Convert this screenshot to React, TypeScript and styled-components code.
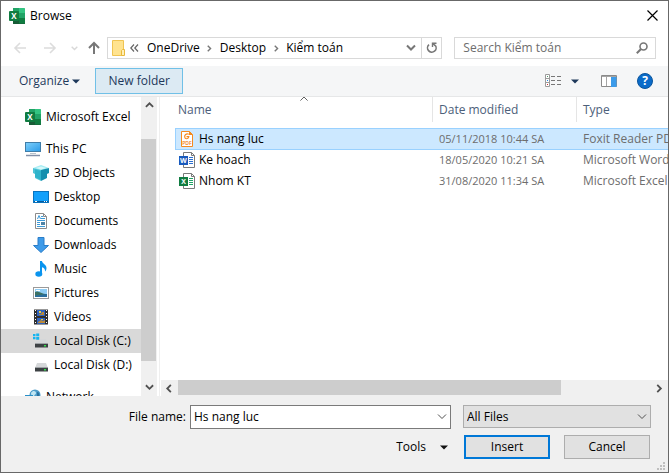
import React, { useState } from "react";
import styled, { createGlobalStyle, css } from "styled-components";

const GlobalStyle = createGlobalStyle`
  *, *::before, *::after { box-sizing: border-box; }
  body { margin: 0; }
  body, button, input, select {
    font-family: "Open Sans", "Noto Sans", sans-serif;
    font-size: 12px;
    line-height: 16px;
    color: #000;
  }
  button { border: 0; padding: 0; background: none; cursor: default; }
`;

/* ---------- shell ---------- */

const Dialog = styled.main`
  display: flex;
  flex-direction: column;
  height: 100vh;
  border: 1px solid #686868;
  background: #fff;
  overflow: hidden;
`;

const TitleBar = styled.header`
  display: flex;
  align-items: center;
  gap: 5px;
  height: 29px;
  padding: 0 10px 0 8px;
  flex: none;
`;

const Title = styled.h1`
  margin: 0;
  flex: 1;
  font-size: 12px;
  font-weight: 400;
`;

const IconButton = styled.button<{ $w?: number }>`
  display: flex;
  align-items: center;
  justify-content: center;
  flex: none;
  width: ${(p) => p.$w ?? 16}px;
  height: 20px;
`;

const NavRow = styled.nav`
  display: flex;
  align-items: center;
  flex: none;
  height: 36px;
  padding: 0 12px 0 4px;
`;

const NavButtons = styled.div`
  display: flex;
  align-items: center;
  flex: none;
  margin-right: 2px;
`;

const AddressBar = styled.div`
  display: flex;
  align-items: center;
  flex: 330 1 0;
  min-width: 0;
  height: 22px;
  border: 1px solid #d9d9d9;
  padding-left: 4px;
`;

const Crumbs = styled.ol`
  display: flex;
  align-items: center;
  flex: 1;
  min-width: 0;
  margin: 0;
  padding: 0 0 0 4px;
  list-style: none;
  white-space: nowrap;
`;

const Crumb = styled.li`
  display: flex;
  align-items: center;
`;

const CrumbSeparator = styled.span<{ $first?: boolean }>`
  display: flex;
  justify-content: ${(p) => (p.$first ? "flex-start" : "center")};
  width: ${(p) => (p.$first ? 17 : 20)}px;
`;

const Refresh = styled(IconButton)`
  border-left: 1px solid #d9d9d9;
`;

const SearchBox = styled.label`
  display: flex;
  align-items: center;
  flex: 185 1 0;
  min-width: 0;
  height: 22px;
  margin-left: 12px;
  border: 1px solid #d9d9d9;
  padding: 0 7px 0 8px;
`;

const SearchInput = styled.input`
  flex: 1;
  min-width: 0;
  border: 0;
  padding: 0;
  outline: 0;
  background: none;
  &::placeholder { color: #6d6d6d; opacity: 1; }
`;

const Toolbar = styled.div`
  display: flex;
  align-items: center;
  flex: none;
  height: 31px;
  padding: 0 15px 0 18px;
  background: #f5f6f7;
  border-bottom: 1px solid #e6e7e8;
`;

const ToolButton = styled.button`
  display: flex;
  align-items: center;
  gap: 3px;
  height: 26px;
  color: #1e395b;
`;

const NewFolderButton = styled(ToolButton)`
  justify-content: center;
  width: 88px;
  margin-left: 15px;
  background: #dceaf3;
  border: 1px solid #70c0e7;
`;

const ToolGroup = styled.div`
  display: flex;
  align-items: center;
  margin-left: auto;
`;

const ViewButton = styled(ToolButton)`
  gap: 9px;
  margin-right: 22px;
`;

const HelpButton = styled.button`
  width: 16px;
  height: 16px;
  margin-left: 20px;
  border-radius: 50%;
  background: #0a6bc9;
  border: 1px solid #0b559c;
  color: #fff;
  font-weight: 700;
  line-height: 14px;
`;

/* ---------- body ---------- */

const Body = styled.div`
  display: flex;
  flex: 1;
  min-height: 0;
`;

const Sidebar = styled.nav`
  display: flex;
  flex: none;
  width: 159px;
  padding-right: 2px;
  border-right: 1px solid #efefef;
  overflow: hidden;
`;

const Tree = styled.ul`
  flex: 1;
  margin: 0;
  padding: 8px 0 0;
  list-style: none;
`;

const TreeItem = styled.li<{ $depth: number; $selected?: boolean; $gap?: boolean }>`
  display: flex;
  align-items: center;
  gap: 5px;
  height: 24px;
  margin-top: ${(p) => (p.$gap ? 8 : 0)}px;
  padding-left: ${(p) => 24 + p.$depth * 8}px;
  white-space: nowrap;
  background: ${(p) => (p.$selected ? "#d9d9d9" : "transparent")};
`;

const scrollTrack = css`
  display: flex;
  flex: none;
  background: #f0f0f0;
`;

const VScroll = styled.div`
  ${scrollTrack}
  flex-direction: column;
  width: 16px;
`;

const HScroll = styled.div`
  ${scrollTrack}
  height: 16px;
  margin-left: 1px;
`;

const ScrollArrow = styled.button<{ $size: number }>`
  display: flex;
  flex: none;
  align-items: center;
  justify-content: center;
  min-width: 15px;
  min-height: 15px;
  flex-basis: ${(p) => p.$size}px;
`;

const ScrollSpace = styled.div<{ $grow: number }>`
  flex: ${(p) => p.$grow} 1 0;
`;

const ScrollThumb = styled(ScrollSpace)`
  background: #cdcdcd;
`;

const VThumb = styled(ScrollThumb)`
  width: 15px;
`;

const HThumb = styled(ScrollThumb)`
  height: 15px;
`;

const FilePane = styled.section`
  display: flex;
  flex-direction: column;
  flex: 1;
  min-width: 0;
`;

const FileView = styled.div`
  flex: 1;
  min-height: 0;
  overflow: hidden;
  padding-left: 15px;
`;

const FileTable = styled.table`
  width: 637px;
  min-width: 100%;
  table-layout: fixed;
  border-collapse: separate;
  border-spacing: 0;
`;

const Column = styled.col<{ $w?: number }>`
  width: ${(p) => (p.$w ? `${p.$w}px` : "auto")};
`;

const HeadCell = styled.th`
  padding: 0 0 6px;
  font-weight: 400;
  text-align: left;
  color: #4c607a;
`;

const HeadLabel = styled.div<{ $indent: number }>`
  display: grid;
  align-items: center;
  height: 25px;
  padding-left: ${(p) => p.$indent}px;
  border-right: 1px solid #e5e5e5;
`;

const SortMark = styled.span`
  position: absolute;
  left: 50%;
  top: 0;
  line-height: 0;
  transform: translate(-50%, -25%);
`;

const SortedCell = styled(HeadCell)`
  position: relative;
`;

const FileRow = styled.tr<{ $selected?: boolean }>`
  height: 21px;
  & > td {
    padding: 0 0 0 6px;
    color: #6d6d6d;
    white-space: nowrap;
    overflow: hidden;
    ${(p) =>
      p.$selected &&
      css`
        background: #cce8ff;
        border: solid #99d1ff;
        border-width: 1px 0 0;
        box-shadow: 0 1px 0 #99d1ff;
      `}
  }
  & > td:first-child {
    padding-left: ${(p) => (p.$selected ? 3 : 4)}px;
    color: #000;
    ${(p) => p.$selected && css`border-left-width: 1px;`}
  }
  & > td:nth-child(2) {
    font-size: 11px;
  }
`;

const FileName = styled.span`
  display: flex;
  align-items: center;
  gap: 4px;
`;

/* ---------- footer ---------- */

const Footer = styled.form`
  display: grid;
  gap: 6px;
  flex: none;
  height: 76px;
  align-content: start;
  padding-top: 9px;
  background: #f0f0f0;
  position: relative;
`;

const FooterRow = styled.div<{ $right: number }>`
  display: flex;
  align-items: center;
  justify-content: flex-end;
  height: 24px;
  padding-right: ${(p) => p.$right}px;
`;

const FieldLabel = styled.label`
  flex: none;
  width: 189px;
  padding-right: 4px;
  text-align: right;
`;

const Combo = styled.div`
  display: flex;
  align-items: center;
  flex: 1;
  min-width: 0;
  height: 24px;
  border: 1px solid #7a7a7a;
  background: #fff;
`;

const ComboInput = styled.input`
  flex: 1;
  min-width: 0;
  border: 0;
  outline: 0;
  padding: 0 0 0 3px;
  background: none;
`;

const SelectWrap = styled.div`
  display: grid;
  align-items: center;
  flex: none;
  width: 188px;
  height: 24px;
  margin-left: 12px;
  & > * { grid-area: 1 / 1; }
  & > svg { justify-self: end; margin-right: 4px; pointer-events: none; }
`;

const TypeSelect = styled.select`
  appearance: none;
  width: 100%;
  height: 23px;
  align-self: start;
  padding: 0 20px 0 3px;
  border: 1px solid #adadad;
  border-radius: 0;
  background: #e1e1e1;
`;

const ToolsButton = styled.button`
  display: flex;
  align-items: center;
  gap: 14px;
  margin-right: 16px;
`;

const PushButton = styled.button<{ $primary?: boolean }>`
  width: 86px;
  height: 24px;
  background: #e1e1e1;
  border: ${(p) => (p.$primary ? "2px solid #0078d7" : "1px solid #adadad")};
  & + & { margin-left: 14px; }
`;

const Grip = styled.svg`
  position: absolute;
  right: 3px;
  bottom: 2px;
`;

/* ---------- glyphs ---------- */

type Dir = "up" | "down" | "left" | "right";
const chevrons: Record<Dir, string> = {
  up: "M1 6.5 5 2.5 9 6.5",
  down: "M1 2.5 5 6.5 9 2.5",
  left: "M6.5 1 2.5 5 6.5 9",
  right: "M2.5 1 6.5 5 2.5 9",
};

const Chevron = ({ dir, size = 10, color = "#505050", weight = 2 }: { dir: Dir; size?: number; color?: string; weight?: number }) => (
  <svg width={size} height={size} viewBox="0 0 10 10" fill="none" stroke={color} strokeWidth={weight}>
    <path d={chevrons[dir]} />
  </svg>
);

const Triangle = ({ color = "#1e395b" }: { color?: string }) => (
  <svg width="8" height="5" viewBox="0 0 8 5"><path d="M0 .5h8L4 4.5z" fill={color} /></svg>
);

const Arrow = ({ dir, color }: { dir: "left" | "right" | "up"; color: string }) => (
  <svg width="14" height="14" viewBox="0 0 14 14" fill="none" stroke={color} strokeWidth={dir === "up" ? 2 : 1.6}>
    {dir === "left" && <path d="M13 7H2M7 2 2 7l5 5" />}
    {dir === "right" && <path d="M1 7H12M7 2l5 5-5 5" />}
    {dir === "up" && <path d="M7 13V2M2 7l5-5 5 5" />}
  </svg>
);

const ExcelIcon = () => (
  <svg width="16" height="16" viewBox="0 0 16 16">
    <path d="M4 0h6v5H4z" fill="#21a366" />
    <path d="M10 0h5.500a.5.5 0 0 1 .5.500V5h-6z" fill="#33c481" />
    <path d="M4 5h6v5H4z" fill="#107c41" />
    <path d="M10 5h6v5h-6z" fill="#21a366" />
    <path d="M4 10h12v5.500a.5.5 0 0 1-.5.500h-11a.5.5 0 0 1-.5-.5z" fill="#185c37" />
    <path d="M10 10h6v5.500h-6z" fill="#107c41" />
    <rect y="3" width="10" height="10" rx="1" fill="#107c41" />
    <text x="5" y="11" textAnchor="middle" fontSize="8" fontWeight="700" fill="#fff">X</text>
  </svg>
);

const FolderIcon = () => (
  <svg width="14" height="16" viewBox="0 0 14 16">
    <path d="M.5.5h11v15H.5z" fill="#ffe38f" stroke="#f0c452" />
    <path d="M10.500 9.500h2v6h-3v-5z" fill="#fff0b8" stroke="#e9b93c" />
  </svg>
);

const PcIcon = () => (
  <svg width="16" height="16" viewBox="0 0 16 16">
    <defs><linearGradient id="pc" x2="1" y2="1"><stop stopColor="#7fd0fb" /><stop offset="1" stopColor="#2b9be8" /></linearGradient></defs>
    <rect x=".5" y="1.500" width="15" height="9" fill="url(#pc)" stroke="#3f7da8" />
    <path d="M5 12.500h6" stroke="#b9c3cc" />
    <path d="M1 14.500h14" stroke="#8290a8" strokeWidth="1.500" />
  </svg>
);

const CubeIcon = () => (
  <svg width="16" height="16" viewBox="0 0 16 16">
    <path d="M0 3 8 0l8 3-8 3z" fill="#a5ecf3" />
    <path d="M0 3l8 2v11l-6-3V9L0 8z" fill="#4cc3d6" />
    <path d="M16 3 8 5v11l6-3V9l2-1z" fill="#148fae" />
    <path d="M2 4.500 8 6v9l-6-3z" fill="#2fb3cb" />
    <path d="M3 3 8 1.500 13 3 8 4.500z" fill="#d8f8fa" />
  </svg>
);

const DesktopIcon = () => (
  <svg width="16" height="16" viewBox="0 0 16 16">
    <rect x=".5" y="2.500" width="15" height="11" fill="#12a0fb" stroke="#0873bf" />
    <path d="M1 12.500h14" stroke="#075a9c" />
    <path d="M2 12.500h2m7 0h1m1 0h1" stroke="#fff" />
  </svg>
);

const DocumentIcon = () => (
  <svg width="16" height="16" viewBox="0 0 16 16">
    <path d="M2.500.5h8l3 3v12h-11z" fill="#fff" stroke="#8b8b8b" />
    <path d="M10.500.5v3h3" fill="none" stroke="#8b8b8b" />
    <path d="m4.500 6 1.500-3.500L7.500 6M8 3.500h2M8 5.500h4M4 7.500h8M4 9.500h3M4 11.500h3M4 13.500h8" fill="none" stroke="#3d9ad8" />
    <path d="M8 9h4v3H8z" fill="#4f83a5" />
  </svg>
);

const DownloadIcon = () => (
  <svg width="16" height="16" viewBox="0 0 16 16">
    <path d="M5 .5h6v8h4.500L8 15.500.5 8.500H5z" fill="#3e9be9" stroke="#2a7dc8" />
  </svg>
);

const MusicIcon = () => (
  <svg width="16" height="16" viewBox="0 0 16 16" fill="#0a94ee">
    <path d="M7 0h2c.3 2.600 4.500 3.600 4.500 7 0 1.800-.8 2.800-1.500 3.500.4-2.500-1-3.800-3-4.300V13H7z" />
    <ellipse cx="5.800" cy="13" rx="3.500" ry="2.700" />
  </svg>
);

const PictureIcon = () => (
  <svg width="16" height="16" viewBox="0 0 16 16">
    <rect x=".5" y="2.500" width="15" height="11" fill="#fff" stroke="#9a9a9a" />
    <path d="M2 4h12v8H2z" fill="#8fcdf5" />
    <path d="M2 7c3-2 6 2 12 2v3H2z" fill="#3d7163" />
    <path d="M2 10.500 14 9v3H2z" fill="#2a6e9e" />
    <path d="M3 5.500h4" stroke="#fff" />
  </svg>
);

const VideoIcon = () => (
  <svg width="16" height="16" viewBox="0 0 16 16">
    <path d="M1 .5h14v15H1z" fill="#303030" />
    <path d="M2.500 1v14M13.500 1v14" stroke="#fff" strokeDasharray="1 2" />
    <path d="M4 1h8v6H4zM4 9h8v6H4z" fill="#2f63c0" />
    <path d="M6 5h2l1-2h2v3H6zM5 13l3-2 2 1 2-1v3H5z" fill="#b98a3c" />
    <path d="M6 2h2v2H6zM8 10h2v1H8z" fill="#ecd03f" />
  </svg>
);

const DiskIcon = ({ system }: { system?: boolean }) => (
  <svg width="16" height="16" viewBox="0 0 16 16">
    <path d="M4 6h9l2 5H2z" fill="#d5d7d9" />
    <path d="M2 10.500h13v4H2z" fill="#3d4144" />
    <path d="M2 10.500h13" stroke="#9ea2a5" />
    <path d="M11 12h2v1.500h-2z" fill="#33e04a" />
    {system && <><path d="M0 0h7v8H0z" fill="#d9d9d9" /><path d="M0 1h2.500v2.200H0zM3.200.5h3v2.700h-3zM0 4h2.500v2.200H0zM3.200 4h3v2.700h-3z" fill="#14b4f0" /></>}
  </svg>
);

const NetworkIcon = () => (
  <svg width="16" height="16" viewBox="0 0 16 16">
    <circle cx="10" cy="6" r="5.500" fill="#4d9cc9" />
    <path d="M6 4c2-3 5-2 5 0s-2 1-2 4-3-1-3-4z" fill="#c0e6f3" />
    <path d="M12 3c2 0 3 2 2 5h-2z" fill="#2a719e" />
    <path d="M0 6h8v6H0z" fill="#2a8fc7" />
  </svg>
);

const PdfIcon = () => (
  <svg width="16" height="16" viewBox="0 0 16 16">
    <path d="M2.500.5h8l3 3v12h-11z" fill="#fff" stroke="#f58a1f" />
    <path d="M10 0v4h4z" fill="#f58a1f" />
    <path d="M9.800 3.200C7 2.200 5.500 4 5.700 6 6 8.400 9.500 8.300 9.800 5.700H7.500" fill="none" stroke="#f58a1f" strokeWidth="1.200" />
    <text x="8" y="14" textAnchor="middle" fontSize="5" fontWeight="600" fill="#f0780a">PDF</text>
  </svg>
);

const OfficeFileIcon = ({ letter, color, lines }: { letter: string; color: string; lines: string }) => (
  <svg width="16" height="16" viewBox="0 0 16 16">
    <path d="M4.500.5h8l3 3v12h-11z" fill="#fff" stroke="#7a7a7a" />
    <path d="M12.500.5v3h3" fill="none" stroke="#7a7a7a" />
    <path d="M10 5.500h4M10 7.500h4M10 9.500h4M10 11.500h4" stroke={lines} />
    <rect y="4" width="9" height="9" fill={color} />
    <text x="4.500" y="11" textAnchor="middle" fontSize="7" fontWeight="700" fill="#fff">{letter}</text>
  </svg>
);

const ViewIcon = () => (
  <svg width="17" height="14" viewBox="0 0 17 14" fill="none">
    <path d="M.5.5h4v12h-4zM.5 4.500h4M.5 8.500h4" stroke="#9b9b9b" fill="#fff" />
    <path d="M2 2.500h1" stroke="#4d9b6c" /><path d="M2 6.500h1" stroke="#2685e8" /><path d="M2 10.500h1" stroke="#d13030" />
    <path d="M6 2.500h10M6 6.500h10M6 10.500h10" stroke="#777" strokeDasharray="4 2" />
  </svg>
);

const PreviewIcon = () => (
  <svg width="16" height="12" viewBox="0 0 16 12">
    <path d="M.5.5h15v11H.5z" fill="#fff" stroke="#8a8a8a" />
    <path d="M1 1.500h14M5.500 2v9" stroke="#a5a5a5" />
    <path d="M10 2h5.500v10H10z" fill="#3b9bea" />
  </svg>
);

const RefreshIcon = () => (
  <svg width="12" height="12" viewBox="0 0 12 12" fill="none" stroke="#777" strokeWidth="1.600">
    <path d="M3 2.600A4.300 4.300 0 1 0 9.200 3.200" />
    <path d="M6.500 5V1.200H10.500M6.800 1.500 9.200 3.600" strokeWidth="1.400" />
  </svg>
);

const SearchIcon = () => (
  <svg width="12" height="12" viewBox="0 0 12 12" fill="none" stroke="#777" strokeWidth="1.600">
    <circle cx="7.500" cy="4.500" r="3.500" /><path d="M5 7 .8 11.200" strokeWidth="2" />
  </svg>
);

const CloseIcon = () => (
  <svg width="11" height="11" viewBox="0 0 11 11"><path d="m.5.5 10 10m0-10-10 10" stroke="#000" strokeWidth="1.200" /></svg>
);

/* ---------- data ---------- */

const places = [
  { name: "Microsoft Excel", icon: <ExcelIcon />, depth: 0 },
  { name: "This PC", icon: <PcIcon />, depth: 0, gap: true },
  { name: "3D Objects", icon: <CubeIcon />, depth: 1 },
  { name: "Desktop", icon: <DesktopIcon />, depth: 1 },
  { name: "Documents", icon: <DocumentIcon />, depth: 1 },
  { name: "Downloads", icon: <DownloadIcon />, depth: 1 },
  { name: "Music", icon: <MusicIcon />, depth: 1 },
  { name: "Pictures", icon: <PictureIcon />, depth: 1 },
  { name: "Videos", icon: <VideoIcon />, depth: 1 },
  { name: "Local Disk (C:)", icon: <DiskIcon system />, depth: 1, selected: true },
  { name: "Local Disk (D:)", icon: <DiskIcon />, depth: 1 },
  { name: "Network", icon: <NetworkIcon />, depth: 0, gap: true },
];

const files = [
  { name: "Hs nang luc", date: "05/11/2018 10:44 SA", type: "Foxit Reader PDF Document", icon: <PdfIcon /> },
  { name: "Ke hoach", date: "18/05/2020 10:21 SA", type: "Microsoft Word Document", icon: <OfficeFileIcon letter="W" color="#185abd" lines="#2b6fd0" /> },
  { name: "Nhom KT", date: "31/08/2020 11:34 SA", type: "Microsoft Excel Worksheet", icon: <OfficeFileIcon letter="X" color="#107c41" lines="#21a366" /> },
];

export default function App() {
  const [fileName, setFileName] = useState("Hs nang luc");

  return (
    <>
      <GlobalStyle />
      <Dialog>
        <TitleBar>
          <ExcelIcon />
          <Title>Browse</Title>
          <IconButton aria-label="Close" $w={11}><CloseIcon /></IconButton>
        </TitleBar>

        <NavRow aria-label="Location">
          <NavButtons>
            <IconButton aria-label="Back" $w={30}><Arrow dir="left" color="#dcdcdc" /></IconButton>
            <IconButton aria-label="Forward" $w={30}><Arrow dir="right" color="#dcdcdc" /></IconButton>
            <IconButton aria-label="Recent locations" $w={18}><Chevron dir="down" size={7} color="#d8d8d8" /></IconButton>
            <IconButton aria-label="Up" $w={22}><Arrow dir="up" color="#777" /></IconButton>
          </NavButtons>
          <AddressBar>
            <FolderIcon />
            <Crumbs>
              <Crumb>
                <CrumbSeparator $first>
                  <svg width="9" height="8" viewBox="0 0 9 8" fill="none" stroke="#666" strokeWidth="1.200"><path d="M4 .5.8 4 4 7.500M8 .5 4.800 4 8 7.500" /></svg>
                </CrumbSeparator>
                OneDrive
              </Crumb>
              <Crumb><CrumbSeparator><Chevron dir="right" size={7} color="#777" /></CrumbSeparator>Desktop</Crumb>
              <Crumb><CrumbSeparator><Chevron dir="right" size={7} color="#777" /></CrumbSeparator>Kiểm toán</Crumb>
            </Crumbs>
            <IconButton aria-label="Previous locations" $w={20}><Chevron dir="down" color="#777" /></IconButton>
            <Refresh aria-label="Refresh" $w={20}><RefreshIcon /></Refresh>
          </AddressBar>
          <SearchBox>
            <SearchInput aria-label="Search" placeholder="Search Kiểm toán" />
            <SearchIcon />
          </SearchBox>
        </NavRow>

        <Toolbar role="toolbar">
          <ToolButton>Organize <Triangle /></ToolButton>
          <NewFolderButton>New folder</NewFolderButton>
          <ToolGroup>
            <ViewButton aria-label="Change view"><ViewIcon /><Triangle /></ViewButton>
            <ToolButton aria-label="Preview pane"><PreviewIcon /></ToolButton>
            <HelpButton aria-label="Help">?</HelpButton>
          </ToolGroup>
        </Toolbar>

        <Body>
          <Sidebar aria-label="Places">
            <Tree>
              {places.map((p) => (
                <TreeItem key={p.name} $depth={p.depth} $gap={p.gap} $selected={p.selected}>
                  {p.icon}{p.name}
                </TreeItem>
              ))}
            </Tree>
            <VScroll>
              <ScrollArrow $size={17} aria-label="Scroll up"><Chevron dir="up" size={9} /></ScrollArrow>
              <ScrollSpace $grow={25} />
              <VThumb $grow={222} />
              <ScrollSpace $grow={18} />
              <ScrollArrow $size={17} aria-label="Scroll down"><Chevron dir="down" size={9} /></ScrollArrow>
            </VScroll>
          </Sidebar>

          <FilePane>
            <FileView>
              <FileTable>
                <colgroup>
                  <Column $w={258} />
                  <Column $w={144} />
                  <Column />
                </colgroup>
                <thead>
                  <tr>
                    <SortedCell aria-sort="ascending">
                      <HeadLabel $indent={3}>Name</HeadLabel>
                      <SortMark><Chevron dir="up" size={9} weight={1} /></SortMark>
                    </SortedCell>
                    <HeadCell><HeadLabel $indent={6}>Date modified</HeadLabel></HeadCell>
                    <HeadCell><HeadLabel $indent={6}>Type</HeadLabel></HeadCell>
                  </tr>
                </thead>
                <tbody>
                  {files.map((f) => (
                    <FileRow key={f.name} $selected={f.name === fileName} onClick={() => setFileName(f.name)}>
                      <td><FileName>{f.icon}{f.name}</FileName></td>
                      <td>{f.date}</td>
                      <td>{f.type}</td>
                    </FileRow>
                  ))}
                </tbody>
              </FileTable>
            </FileView>
            <HScroll>
              <ScrollArrow $size={17} aria-label="Scroll left"><Chevron dir="left" size={9} /></ScrollArrow>
              <HThumb $grow={383} />
              <ScrollSpace $grow={90} />
              <ScrollArrow $size={17} aria-label="Scroll right"><Chevron dir="right" size={9} /></ScrollArrow>
            </HScroll>
          </FilePane>
        </Body>

        <Footer onSubmit={(e) => e.preventDefault()}>
          <FooterRow $right={17}>
            <FieldLabel htmlFor="file-name">File name:</FieldLabel>
            <Combo>
              <ComboInput id="file-name" value={fileName} onChange={(e) => setFileName(e.target.value)} />
              <IconButton type="button" aria-label="Recent file names"><Chevron dir="down" size={10} weight={1} /></IconButton>
            </Combo>
            <SelectWrap>
              <TypeSelect aria-label="File type"><option>All Files</option></TypeSelect>
              <Chevron dir="down" size={10} weight={1} />
            </SelectWrap>
          </FooterRow>
          <FooterRow $right={18}>
            <ToolsButton type="button">Tools <Triangle color="#111" /></ToolsButton>
            <PushButton $primary type="submit">Insert</PushButton>
            <PushButton type="button">Cancel</PushButton>
          </FooterRow>
          <Grip width="8" height="8" viewBox="0 0 8 8" fill="#bfbfbf">
            <path d="M6 0h2v2H6zM3 3h2v2H3zM6 3h2v2H6zM0 6h2v2H0zM3 6h2v2H3zM6 6h2v2H6z" />
          </Grip>
        </Footer>
      </Dialog>
    </>
  );
}
